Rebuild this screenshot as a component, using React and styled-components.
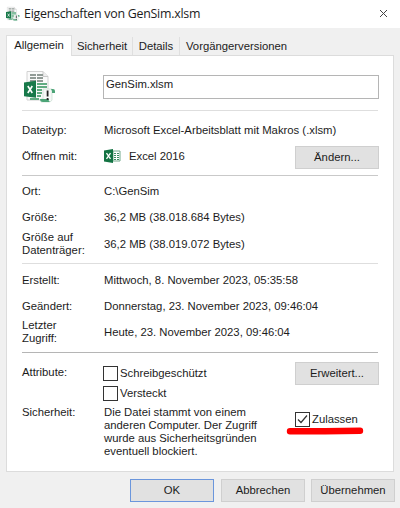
import React from "react";
import styled, { createGlobalStyle } from "styled-components";

const Global = createGlobalStyle`
  * { box-sizing: border-box; }
  body { margin: 0; background: #f0f0f0; overflow: hidden; }
`;
const Dialog = styled.main`
  width: 400px;
  height: 508px;
  background: #f0f0f0;
  color: #1c1c1c;
  font: 11.3px/13px "Liberation Sans", Arial, sans-serif;
  white-space: nowrap;
`;
const TitleBar = styled.header`
  height: 28px;
  padding: 0 12px 1px 6px;
  display: flex;
  align-items: center;
  background: #fff;
`;
const Title = styled.h1`
  margin: 0 auto 0 4px;
  padding-top: 1px;
  font: 12.4px/18px "Open Sans", "Noto Sans", sans-serif;
  letter-spacing: -0.26px;
`;
const Tabs = styled.nav`
  height: 27px;
  padding: 7px 0 0 6px;
  display: flex;
  align-items: flex-end;
`;
const Tab = styled.div`
  width: ${(p) => p.$width}px;
  height: ${(p) => (p.$active ? 21 : 18)}px;
  margin-bottom: ${(p) => (p.$active ? -1 : 0)}px;
  padding-top: 3px;
  position: relative;
  text-align: center;
  background: ${(p) => (p.$active ? "#fff" : "#f0f0f0")};
  border: solid #dfdfdf;
  border-width: ${(p) => (p.$active ? "1px 1px 0 1px" : p.$last ? "0" : "0 1px 0 0")};
`;
const Panel = styled.section`
  width: 388px;
  height: 417px;
  margin-left: 6px;
  padding: 0 14px 0 15px;
  background: #fff;
  border: 1px solid #dcdcdc;
`;
const Section = styled.section`
  height: ${(p) => p.$height}px;
  width: 356px;
  padding-top: ${(p) => p.$top || 0}px;
  border-bottom: ${(p) => (p.$line ? `1px solid ${p.$line}` : "0")};
`;
const Row = styled.div`
  height: ${(p) => p.$height || 26}px;
  display: grid;
  grid-template-columns: 82px 1fr auto;
  align-items: center;
`;
const Label = styled.span`
  white-space: pre-line;
`;
const OpensWith = styled.span`
  display: flex;
  align-items: center;
  gap: 8px;
`;
const FileRow = styled.div`
  display: grid;
  grid-template-columns: 81px 276px;
  padding-top: 15px;
`;
const FileIcon = styled.span`
  display: block;
  height: 32px;
  padding-left: 2px;
`;
const NameField = styled.input`
  width: 276px;
  height: 24px;
  margin-top: 4px;
  padding: 0 2px 6px;
  border: 1px solid #b5b5b5;
  border-radius: 0;
  background: #fff;
  color: #1c1c1c;
  font: inherit;
  outline: 0;
`;
const Button = styled.button`
  width: 84px;
  height: 23px;
  margin: ${(p) => p.$margin || "0"};
  padding: 0;
  border: 1px solid ${(p) => (p.$primary ? "#6b96dc" : "#cfcfcf")};
  border-radius: 0;
  background: #e1e1e1;
  color: #1c1c1c;
  font: inherit;
`;
const Attributes = styled.div`
  display: grid;
  grid-template-columns: 81px 1fr 84px;
  width: 357px;
  height: 44px;
`;
const AttributeLabel = styled.span`
  padding-top: 4px;
`;
const Checks = styled.div`
  display: flex;
  flex-direction: column;
  gap: 5px;
  padding-top: 4px;
`;
const Check = styled.label`
  height: 15px;
  display: flex;
  align-items: center;
  gap: 2px;
`;
const CheckText = styled.span`
  padding-bottom: 1px;
`;
const Box = styled.span`
  width: 15px;
  height: 15px;
  display: grid;
  place-items: center;
  border: 1px solid #333;
  background: #fff;
`;
const Security = styled.div`
  display: grid;
  grid-template-columns: 82px 184px 1fr;
`;
const Allow = styled.div`
  position: relative;
  padding: 6px 0 0 7px;
`;
const Marker = styled.svg`
  position: absolute;
  left: -2px;
  top: 19.5px;
`;
const Footer = styled.footer`
  display: flex;
  padding: 7px 5px 0 130px;
`;

function Workbook({ width, height }) {
  return (
    <svg width={width} height={height} viewBox="0 0 32 32">
      <path d="M3 .5h16l5 5V29H3z" fill="#fafafa" stroke="#d2d2d2" />
      <path d="M19 .5v5h5" fill="#eee" stroke="#c9c9c9" />
      <path d="M6 3h6v2H6zm7 0h6v2h-6zM6 6h6v2H6zm7 0h6v2h-6zM6 9h6v2H6zm7 0h6v2h-6z" fill="#919b96" />
      <path d="M13 12h10v2H13zm0 3h10v2H13zm0 3h5v2h-5zm0 3h5v2h-5zm0 3h4v2h-4zM6 27h9v2H6z" fill="#61ac82" />
      <path d="M0 11.5l12-1.7v17L0 25.2z" fill="#18794a" />
      <path d="M3.8 15l4.5 7m0-7l-4.5 7" stroke="#fff" strokeWidth="1.6" fill="none" />
      <path d="M19 18h9v11q-1 2-3 2h-8v-3h2z" fill="#f6f8f7" stroke="#c5dccf" strokeWidth=".7" />
      <path d="M27 18h2q2 0 2 2v2h-3v-2zM16 28h9q-1 2 1 3h-7q-3 0-3-3z" fill="#4ca477" />
      <path d="M23.6 19.5v6m0 1.5v2" stroke="#222" strokeWidth="1.8" />
    </svg>
  );
}
function ExcelIcon() {
  return (
    <svg width="17" height="14" viewBox="0 0 17 14">
      <path d="M9 2h7v10H9z" fill="#fff" stroke="#73aa8c" />
      <path d="M10 4.5h2m1 0h2m-5 2h2m1 0h2m-5 2h2m1 0h2m-5 2h2m1 0h2" stroke="#3c8a61" />
      <path d="M0 1.5L9 0v14l-9-1.5z" fill="#137343" />
      <path d="M2.5 4.2l4 5.7m0-5.7l-4 5.7" stroke="#fff" strokeWidth="1.3" />
    </svg>
  );
}

export default function App() {
  return (
    <Dialog>
      <Global />
      <TitleBar>
        <Workbook width={14} height={16} />
        <Title>Eigenschaften von GenSim.xlsm</Title>
        <svg width="9" height="9" viewBox="0 0 9 9"><path d="M1 1l7 7M8 1L1 8" stroke="#444" fill="none" /></svg>
      </TitleBar>
      <Tabs>
        <Tab $active $width={66}>Allgemein</Tab>
        <Tab $width={61}>Sicherheit</Tab>
        <Tab $width={47}>Details</Tab>
        <Tab $last $width={113}>Vorgängerversionen</Tab>
      </Tabs>
      <Panel>
        <Section $height={55} $line="#dedede">
          <FileRow>
            <FileIcon><Workbook width={32} height={32} /></FileIcon>
            <NameField aria-label="Dateiname" defaultValue="GenSim.xlsm" />
          </FileRow>
        </Section>
        <Section $height={65} $top={6} $line="#c9c9c9">
          <Row><Label>Dateityp:</Label><Label>Microsoft Excel-Arbeitsblatt mit Makros (.xlsm)</Label></Row>
          <Row $height={25}>
            <Label>Öffnen mit:</Label><OpensWith><ExcelIcon />Excel 2016</OpensWith>
            <Button $margin="3px -1px 0 0">Ändern...</Button>
          </Row>
        </Section>
        <Section $height={88} $top={2} $line="#dedede">
          <Row><Label>Ort:</Label><Label>C:\GenSim</Label></Row>
          <Row $height={27}><Label>Größe:</Label><Label>36,2 MB (38.018.684 Bytes)</Label></Row>
          <Row><Label>{"Größe auf\nDatenträger:"}</Label><Label>36,2 MB (38.019.072 Bytes)</Label></Row>
        </Section>
        <Section $height={89} $top={3} $line="#b5b5b5">
          <Row><Label>Erstellt:</Label><Label>Mittwoch, 8. November 2023, 05:35:58</Label></Row>
          <Row><Label>Geändert:</Label><Label>Donnerstag, 23. November 2023, 09:46:04</Label></Row>
          <Row><Label>{"Letzter\nZugriff:"}</Label><Label>Heute, 23. November 2023, 09:46:04</Label></Row>
        </Section>
        <Section $height={116} $top={9}>
          <Attributes>
            <AttributeLabel>Attribute:</AttributeLabel>
            <Checks>
              <Check><Box /><CheckText>Schreibgeschützt</CheckText></Check>
              <Check><Box /><CheckText>Versteckt</CheckText></Check>
            </Checks>
            <Button>Erweitert...</Button>
          </Attributes>
          <Security>
            <Label>Sicherheit:</Label>
            <Label>{"Die Datei stammt von einem\nanderen Computer. Der Zugriff\nwurde aus Sicherheitsgründen\neventuell blockiert."}</Label>
            <Allow>
              <Check>
                <Box><svg width="11" height="11" viewBox="0 0 11 11"><path d="M1 5.5l3 3 6-7" stroke="#333" strokeWidth="1.2" fill="none" /></svg></Box>
                <CheckText>Zulassen</CheckText>
              </Check>
              <Marker width="78" height="10" viewBox="0 0 78 10"><path d="M4 5.2h35l35-.4" stroke="#f00" strokeWidth="6.4" strokeLinecap="round" fill="none" /></Marker>
            </Allow>
          </Security>
        </Section>
      </Panel>
      <Footer>
        <Button $primary>OK</Button>
        <Button $margin="0 0 0 7px">Abbrechen</Button>
        <Button $margin="0 0 0 6px">Übernehmen</Button>
      </Footer>
    </Dialog>
  );
}
